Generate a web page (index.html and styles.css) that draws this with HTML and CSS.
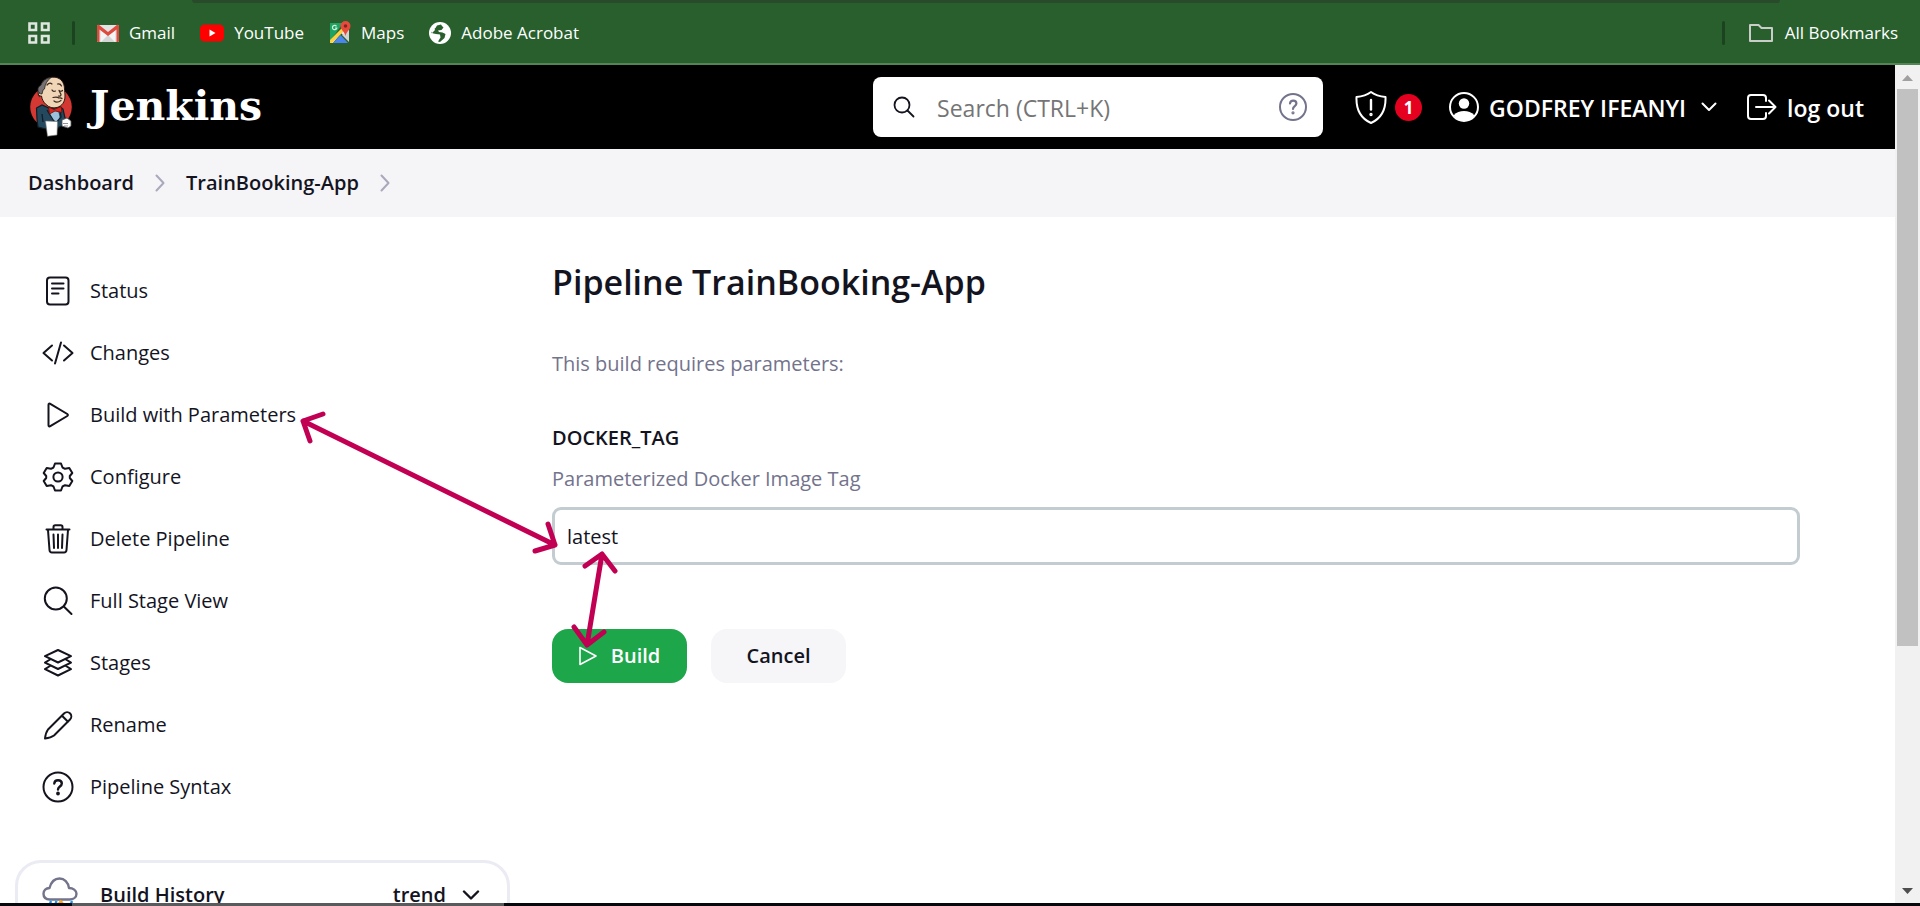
FILE: index.html
```html
<!DOCTYPE html>
<html lang="en">
<head>
<meta charset="utf-8">
<title>Pipeline TrainBooking-App - Jenkins</title>
<link rel="stylesheet" href="styles.css">
</head>
<body>
<nav class="bookmarks" aria-label="Bookmarks">
  <button class="apps" aria-label="Apps"><svg width="22" height="22" viewBox="0 0 22 22" fill="none" stroke="#dfe6df" stroke-width="2.6"><path d="M1.5 1.5h6.500v6.500H1.500zM14 1.500h6.500v6.500H14zM1.500 14h6.500v6.500H1.500zM14 14h6.500v6.500H14z"/></svg></button>
  <span class="sep"></span>
  <a class="mark" href="#"><svg width="22" height="22" viewBox="0 0 22 22"><rect x="0" y="3" width="22" height="17" rx="1" fill="#e3e3e3"/><path d="M4 20V9l7 5 7-5v11z" fill="#f4f4f4"/><path d="M4 20l7-7 7 7z" fill="#d5d5d5"/><path d="M0 4v15a1 1 0 0 0 1 1h1.500V7.500L11 14l8.500-6.500V20H21a1 1 0 0 0 1-1V4c0-1-1.500-1.500-2.500-.8L11 10 2.500 3.200C1.500 2.500 0 3 0 4z" fill="#dd4b3e"/></svg>Gmail</a>
  <a class="mark" href="#"><svg width="24" height="18" viewBox="0 0 24 18"><rect y=".5" width="24" height="17" rx="4.500" fill="#f00"/><path d="M9.500 5.500v7l6-3.500z" fill="#fff"/></svg>YouTube</a>
  <a class="mark" href="#"><svg width="22" height="23" viewBox="0 0 22 23"><path d="M1 2h13L7 12l-6 8z" fill="#1ea362"/><path d="M1 20 16 5l4 4v11L12 12 4 22H1z" fill="#e8e8e8"/><path d="M1 19 15 5l2 3L3 22H1z" fill="#fdd13f"/><path d="M4 22 11.500 14l7.500 8z" fill="#4a86f0"/><path d="M20 10v11l-7-7z" fill="#d3d3d3"/><path d="M7.500 5.300A2.200 2.200 0 1 0 7.800 7H6" fill="none" stroke="#cdeedd" stroke-width="1.200"/><path d="M16.500 0A5 5 0 0 0 11.500 5c0 4 4 5 5 10 1-5 5-6 5-10a5 5 0 0 0-5-5z" fill="#e84b3c"/><circle cx="16.500" cy="5" r="1.800" fill="#80271f"/></svg>Maps</a>
  <a class="mark" href="#"><svg width="22" height="22" viewBox="0 0 22 22"><circle cx="11" cy="11" r="11" fill="#fff"/><path d="M12 2.500 8 3.500 6.500 6 4 7.500 2 11l5 1 4 .5.500 3L9 19.500 11 20l4.500-4 1-4-3-1.500L10 10 9 8.500l3.500-.5 2-2.500L13 4z" fill="#285f2d"/><path d="M5 5 2.500 9.500 3 13l3 5 3 1.500.500-4L5 13l-2-2 3-3z" fill="#fff"/></svg>Adobe Acrobat</a>
  <span class="grow"></span>
  <span class="sep"></span>
  <button class="mark all"><svg width="24" height="18" viewBox="0 0 24 18" fill="none" stroke="#c9cdc9" stroke-width="2" stroke-linejoin="round"><path d="M1 1h8.500l3 3H23v13H1z"/></svg>All Bookmarks</button>
  <span class="omnibox-edge"></span>
</nav>

<div class="window">
  <div class="page">
    <header class="header">
      <a class="brand" href="#">
        <svg width="46" height="62" viewBox="0 0 46 62">
          <ellipse cx="23" cy="31" rx="20.800" ry="21" fill="#d33833"/>
          <path d="M8.500 32 14 29l9 4 8-3 4 3 2 9 4 1 1 6-5 2-3-1-3 1-2 2-7 1-12-3-1-8z" fill="#24495e" stroke="#0f1d26" stroke-width="1.200"/>
          <path d="M21 36l9-2 2 9-3 3-5-3z" fill="#9cc3dc"/>
          <path d="M19 34l8 13M32 33l1 8-5 6M14 38l1 8" fill="none" stroke="#0f1d26" stroke-width="1.300"/>
          <path d="M13 9C15 3 21 .8 27 1.200c6 .8 9.500 5.500 9.500 11.800 0 2 .5 4 .5 7 0 6-3 10-8 11.500-4 1-8 0-11-3-2.500-2.500-4-5-4.500-8.500-2 .5-3.500-1-3.500-3.500s1-3.500 2.500-3.500z" fill="#f0d6b7" stroke="#2a1a12" stroke-width="1"/>
          <path d="M13 9c1.500-4 5-7 10-7.500-4 3-6 7-6.500 11.500l-1.500 1-1 4c-2 0-4-1.500-4-3.500-.5-2.500 1-4.500 3-5.500z" fill="#777174" stroke="#222" stroke-width=".8"/>
          <path d="M12 17c-2 0-2.500 3 0 4" fill="none" stroke="#2a1a12" stroke-width=".8"/>
          <path d="M19 9q2.500-3 5-1M29.500 8q3-.5 4 2M24 14q1 2 3.500 1M31 14.500l2 4c0 1.500-1 2-2.500 1.500M31 14.500q2 1.500 3.500 0M25 21.500q4-1 6 .5 2-.5 3 .5M26 25q3 2.500 7-.5" fill="none" stroke="#3c2a1f" stroke-width="1.200" stroke-linecap="round"/>
          <path d="M20.500 31l5.500 2.500 7-3 1 6-7-1.500-5.500 3z" fill="#e0221b" stroke="#591512" stroke-width=".8"/>
          <path d="M17.500 45l12 .5L29 59l-9.500 1.200z" fill="#fff" stroke="#777" stroke-width=".6"/>
          <path d="M34 44l5-2 4 3v5l-3 2-6-2z" fill="#fff" stroke="#555" stroke-width=".8"/><path d="M35 47.500h5M36 50h4" stroke="#777" stroke-width=".8"/>
        </svg>
        <span class="wordmark">Jenkins</span>
      </a>
      <div class="header-tools">
        <div class="search">
          <svg width="22" height="22" viewBox="0 0 22 22" fill="none" stroke="#14141f" stroke-width="1.800" stroke-linecap="round"><circle cx="9" cy="9" r="7.500"/><path d="M14.500 14.500 20.500 20.500"/></svg>
          <input type="text" aria-label="Search" placeholder="Search (CTRL+K)">
          <a href="#" aria-label="Search help"><svg width="28" height="28" viewBox="0 0 28 28" fill="none" stroke="#73738c" stroke-width="2" stroke-linecap="round" stroke-linejoin="round"><circle cx="14" cy="14" r="13"/><path d="M11 10.500c.200-2 1.600-2.800 3.200-2.800 1.800 0 3.200 1.100 3.200 2.800 0 2.600-3.400 2.600-3.400 5.400" stroke-width="2.200"/><circle cx="14" cy="19.800" r=".6"/></svg></a>
        </div>
        <a class="alerts" href="#" aria-label="1 security warning">
          <svg width="32" height="34" viewBox="0 0 32 34" fill="none" stroke="#fff" stroke-width="2" stroke-linejoin="round" stroke-linecap="round"><path d="M16 2c-4 3-9 4.500-14.500 5C1 19 6 28.500 16 33 26 28.500 31 19 30.500 7 25 6.500 20 5 16 2z"/><path d="M16 10v9.500" stroke-width="2.400"/><circle cx="16" cy="24.500" r=".7"/></svg>
          <span class="badge">1</span>
        </a>
        <a class="tool" href="#">
          <svg width="30" height="30" viewBox="0 0 30 30"><circle cx="15" cy="15" r="14" fill="none" stroke="#fff" stroke-width="2"/><circle cx="15" cy="11.500" r="5.200" fill="#fff"/><path d="M4.500 23.500c3-3.500 6.500-4.500 10.500-4.500s7.500 1 10.500 4.500A14 14 0 0 1 15 29a14 14 0 0 1-10.500-5.500z" fill="#fff"/></svg>
          <span>GODFREY IFEANYI</span>
        </a>
        <button class="more" aria-label="User menu"><svg width="16" height="10" viewBox="0 0 16 10" fill="none" stroke="#fff" stroke-width="2" stroke-linecap="round" stroke-linejoin="round"><path d="M1.500 1.500 8 8l6.500-6.500"/></svg></button>
        <a class="tool" href="#">
          <svg width="30" height="26" viewBox="0 0 30 26" fill="none" stroke="#fff" stroke-width="2" stroke-linecap="round" stroke-linejoin="round"><path d="M19 7V4a3 3 0 0 0-3-3H4a3 3 0 0 0-3 3v18a3 3 0 0 0 3 3h12a3 3 0 0 0 3-3v-3M9 13h19.500M22 6.500l6.500 6.500-6.500 6.500"/></svg>
          <span>log out</span>
        </a>
      </div>
    </header>

    <nav class="crumbs" aria-label="Breadcrumb">
      <a href="#">Dashboard</a>
      <svg width="10" height="18" viewBox="0 0 10 18" fill="none" stroke="#a9a9bb" stroke-width="2" stroke-linecap="round" stroke-linejoin="round"><path d="M1.500 1.500 8.500 9l-7 7.500"/></svg>
      <a href="#">TrainBooking-App</a>
      <svg width="10" height="18" viewBox="0 0 10 18" fill="none" stroke="#a9a9bb" stroke-width="2" stroke-linecap="round" stroke-linejoin="round"><path d="M1.500 1.500 8.500 9l-7 7.500"/></svg>
    </nav>

    <div class="body">
      <aside class="side">
        <ul class="tasks">
          <li><a href="#"><svg class="ico" viewBox="0 0 32 32"><rect x="5" y="2.500" width="21.500" height="27" rx="3"/><path d="M10 8.500h11.500M10 13.500h11.500M10 18.500h6.500"/></svg>Status</a></li>
          <li><a href="#"><svg class="ico" viewBox="0 0 32 32"><path d="M10 8.500 1.500 16l8.500 7.500M22 8.500l8.500 7.500-8.500 7.500M19 5.500l-6 21"/></svg>Changes</a></li>
          <li><a href="#"><svg class="ico" viewBox="0 0 32 32"><path d="M6.500 5.800v20.400c0 1 1 1.500 1.800 1l17-10.200c.8-.5.8-1.500 0-2L8.300 4.800c-.8-.5-1.800 0-1.800 1z"/></svg>Build with Parameters</a></li>
          <li><a href="#"><svg class="ico" viewBox="0 0 32 32"><circle cx="16" cy="16" r="4.600"/><path d="M13 2.500h6l1.500 4 2.500 1.300 4.300-.8 3 5-2.500 3v2l2.500 3-3 5-4.300-.8-2.500 1.300-1.500 4h-6l-1.500-4L9 24.200l-4.300.8-3-5 2.500-3v-2l-2.500-3 3-5 4.300.8 2.500-1.300z"/></svg>Configure</a></li>
          <li><a href="#"><svg class="ico" viewBox="0 0 32 32"><path d="M6 7l1.500 20c.1 1.500 1 2.500 2.500 2.500h12c1.500 0 2.400-1 2.500-2.500L26 7M4.500 6.500h23M11.500 6V4c0-1 .7-1.700 1.700-1.700h5.600c1 0 1.700.7 1.700 1.700v2M11.500 11.500l.5 13.500M16 11.500V25M20.500 11.500 20 25"/></svg>Delete Pipeline</a></li>
          <li><a href="#"><svg class="ico" viewBox="0 0 32 32"><circle cx="13.800" cy="13.500" r="11"/><path d="M21.800 21.500 29.500 29"/></svg>Full Stage View</a></li>
          <li><a href="#"><svg class="ico" viewBox="0 0 32 32"><path d="M16 3 3 9.200 16 15.500l13-6.300zM8 12.500 3 15.700 16 22l13-6.300-5-3.200M8 19 3 22.200l13 6.300 13-6.300-5-3.200"/></svg>Stages</a></li>
          <li><a href="#"><svg class="ico" viewBox="0 0 32 32"><path d="M22 4.500 6 20.500c-1.500 2-2.500 5-3 9 4-.5 7-1.500 9-3L28 10.500c1.700-1.700 1.700-4.300.2-6-1.700-1.700-4.500-1.700-6.200 0zM20 6.700l6 6"/></svg>Rename</a></li>
          <li><a href="#"><svg class="ico" viewBox="0 0 32 32"><circle cx="16" cy="16" r="14.500"/><path d="M12.300 12.500c.200-2.200 1.700-3.300 3.700-3.300 2.200 0 3.800 1.300 3.800 3.300 0 3-3.800 3-3.800 6" stroke-width="2.400"/><circle cx="16" cy="22.500" r=".9"/></svg>Pipeline Syntax</a></li>
        </ul>
        <section class="history">
          <svg width="36" height="36" viewBox="0 0 36 36" fill="none" stroke="#73738c" stroke-width="2.400" stroke-linejoin="round"><path d="M8 22.500c-4 0-6.500-2.200-6.500-5.700 0-3.300 2.500-5.600 6-5.800C9 5.500 12.500 1.500 17.500 1.500S26 5.500 27 11c4 0 7.500 2.500 7.500 5.800s-3 5.700-7 5.700z"/><path d="M9 24l-2 6M30 24l-2 6M14.500 24l-2 6" stroke="#0b9bf5"/><path d="M20 24l-3 4h5l-3 5" stroke="#fba91b" stroke-width="4"/></svg>
          <span class="history-title">Build History</span>
          <a class="trend" href="#">trend<svg width="18" height="11" viewBox="0 0 18 11" fill="none" stroke="#14141f" stroke-width="2.400" stroke-linecap="round" stroke-linejoin="round"><path d="M2 1.500l7 7 7-7"/></svg></a>
        </section>
      </aside>

      <main class="main">
        <h1>Pipeline TrainBooking-App</h1>
        <p class="note">This build requires parameters:</p>
        <form class="form">
          <label for="tag">DOCKER_TAG</label>
          <p class="help">Parameterized Docker Image Tag</p>
          <input id="tag" type="text" value="latest">
          <div class="actions">
            <button class="btn primary" type="button"><svg width="18" height="20" viewBox="0 0 18 20" fill="none" stroke="#fff" stroke-width="1.600" stroke-linejoin="round"><path d="M1 1.500v17L17 10z"/></svg>Build</button>
            <button class="btn" type="button">Cancel</button>
          </div>
        </form>
      </main>
    </div>
  </div>

  <div class="scroll" aria-hidden="true">
    <svg width="11" height="6" viewBox="0 0 11 6"><path d="M0 6 5.500 0 11 6z" fill="#a0a0a0"/></svg>
    <span class="thumb"></span>
    <svg class="down" width="11" height="6" viewBox="0 0 11 6"><path d="M0 0 5.500 6 11 0z" fill="#4e4e4e"/></svg>
  </div>
</div>
<div class="edge"><span></span></div>

<svg class="arrows" width="340" height="260" viewBox="290 400 340 260" fill="none" stroke="#c20053" stroke-width="5" stroke-linecap="round" stroke-linejoin="round" aria-hidden="true">
  <path d="M303 421 555 545M323 414l-20 7 7 20M535 551l20-6-7-21M602 554l-15 91M585 566l17-12 13 17M574 627l13 18 17-13"/>
</svg>
</body>
</html>
```

FILE: styles.css
```css
* { box-sizing: border-box; }

body {
  margin: 0;
  height: 100vh;
  overflow: hidden;
  display: flex;
  flex-direction: column;
  position: relative;
  background: #fff;
  color: #14141f;
  font: 20px/28px "Open Sans", "Noto Sans", sans-serif;
}

svg { flex: none; display: block; }
a { color: inherit; text-decoration: none; }
button { font: inherit; color: inherit; border: 0; padding: 0; background: none; }

/* bookmarks bar */
.bookmarks {
  position: relative;
  flex: none;
  display: flex;
  align-items: center;
  height: 65px;
  padding: 2px 22px 0 28px;
  background: #285f2d;
  border-bottom: 2px solid #568459;
  color: #fff;
  font-size: 17px;
}
.omnibox-edge {
  position: absolute;
  top: 0;
  left: 10%;
  right: 140px;
  height: 3px;
  border-radius: 0 0 14px 14px;
  background: #294b2b;
}
.sep { width: 3px; height: 24px; border-radius: 2px; background: #1b431f; }
.apps + .sep { margin: 0 22px; }
.mark { display: flex; align-items: center; gap: 10px; margin-right: 25px; }
.grow { flex: 1; }
.mark.all { gap: 12px; margin: 0 0 0 24px; }

/* window */
.window { flex: 1; min-height: 0; display: flex; }
.page { flex: 1; min-width: 0; overflow: hidden; }

.header {
  display: flex;
  align-items: center;
  justify-content: space-between;
  height: 84px;
  padding: 0 31px 0 28px;
  background: #000;
  color: #fff;
}
.brand { display: flex; align-items: center; gap: 16px; }
.wordmark { padding-bottom: 2px; font: bold 41px/48px "DejaVu Serif", serif; }
.header-tools { display: flex; align-items: center; }
.search {
  display: flex;
  align-items: center;
  width: 450px;
  height: 60px;
  margin-right: 32px;
  padding: 0 16px 0 20px;
  border-radius: 8px;
  background: #fff;
}
.search input {
  flex: 1;
  min-width: 0;
  margin: 0 22px;
  padding: 2px 0 0;
  border: 0;
  outline: 0;
  background: none;
  font: 23px/32px "Open Sans", "Noto Sans", sans-serif;
}
.search input::placeholder { color: #757575; opacity: 1; }
.alerts { display: flex; align-items: center; gap: 8px; margin-right: 27px; }
.badge {
  width: 27px;
  height: 27px;
  border-radius: 50%;
  background: #e6001f;
  font-size: 17px;
  font-weight: 700;
  line-height: 27px;
  text-align: center;
}
.tool { display: flex; align-items: center; gap: 10px; font-size: 23px; font-weight: 600; }
.tool span { padding-top: 2px; }
.more { margin: 0 30px 0 15px; }

.crumbs {
  display: flex;
  align-items: center;
  gap: 21px;
  height: 68px;
  padding: 0 28px;
  background: #f5f5f8;
  font-weight: 600;
}

/* content */
.body { display: flex; }
.side { flex: none; width: 552px; padding: 43px 42px 0 15px; }
.tasks { margin: 0; padding: 0 0 0 27px; list-style: none; }
.tasks a { display: flex; align-items: center; gap: 16px; height: 62px; }
.ico {
  width: 32px;
  height: 32px;
  fill: none;
  stroke: #14141f;
  stroke-width: 2;
  stroke-linecap: round;
  stroke-linejoin: round;
}
.history {
  display: flex;
  align-items: center;
  height: 160px;
  margin-top: 42px;
  padding: 0 27px 90px 24px;
  border: 3px solid #ebebf4;
  border-radius: 26px;
  font-weight: 600;
}
.history-title { flex: 1; margin-left: 22px; }
.trend { display: flex; align-items: center; gap: 16px; }

.main { flex: 1; padding: 40px 95px 0 0; }
h1 { margin: 0; font-size: 34px; line-height: 50px; font-weight: 600; }
.note { margin: 43px 0 0; color: #73738c; }
.form { display: flex; flex-direction: column; margin-top: 46px; }
.form label { font-weight: 600; }
.help { margin: 13px 0 14px; color: #73738c; }
.form input {
  height: 58px;
  padding: 0 12px;
  border: 3px solid #c3ccd1;
  border-radius: 9px;
  background: #fff;
  color: inherit;
  font: inherit;
}
.actions { display: flex; gap: 24px; margin-top: 64px; }
.btn {
  display: flex;
  align-items: center;
  justify-content: center;
  gap: 14px;
  width: 135px;
  height: 54px;
  border-radius: 16px;
  background: #f6f6f9;
  font-weight: 600;
}
.btn.primary { background: #1ea64b; color: #fff; }

/* browser scrollbar */
.scroll {
  flex: none;
  display: flex;
  flex-direction: column;
  align-items: center;
  width: 25px;
  padding: 10px 2px 9px;
  background: #f1f1f1;
}
.thumb { width: 21px; height: 68%; margin-top: 8px; background: #c1c1c1; }
.down { margin-top: auto; }

.edge { flex: none; height: 3px; padding-left: 72px; background: #08080c; }
.edge span { display: block; width: 432px; height: 3px; background: #5a5a5c; }

.arrows { position: absolute; left: 290px; top: 400px; }
```
